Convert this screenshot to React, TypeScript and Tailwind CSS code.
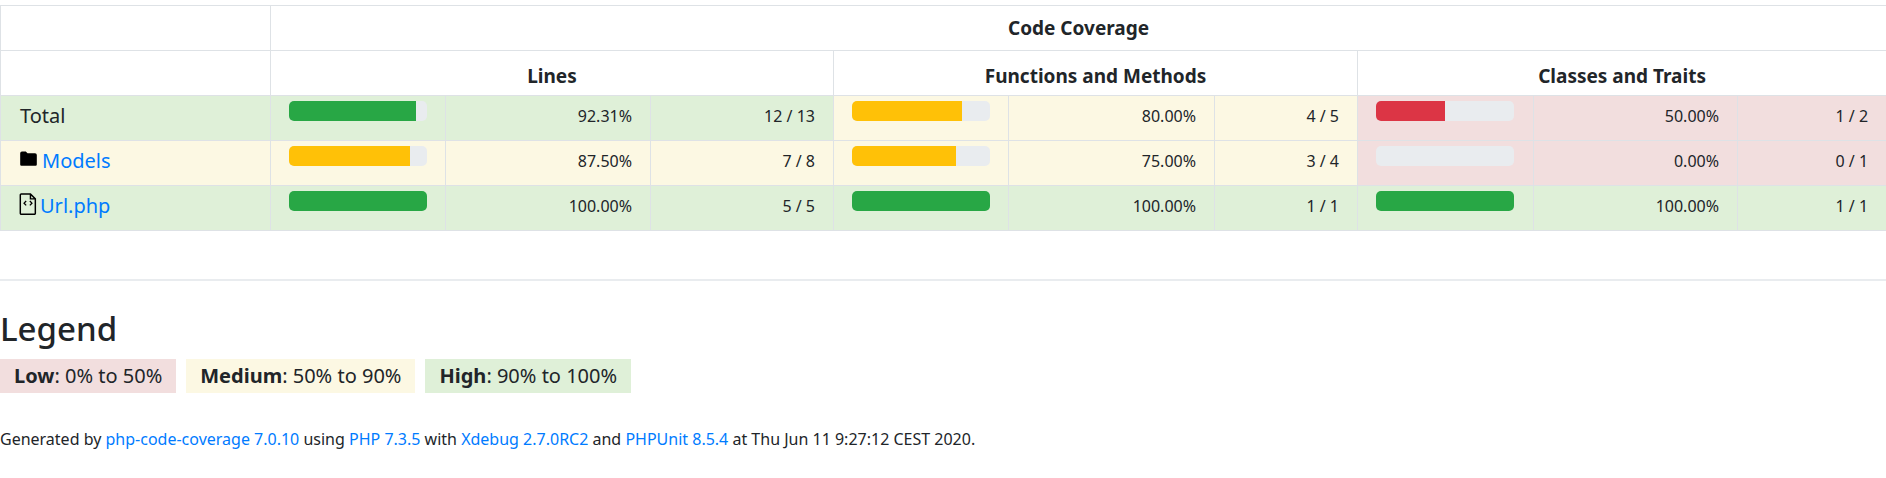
import React from "react";

type Cell = { pct: number; label: string; frac: string };
type Row = { name: string; kind: "total" | "dir" | "file"; cells: Cell[] };

const rows: Row[] = [
  { name: "Total", kind: "total", cells: [
    { pct: 92.31, label: "92.31%", frac: "12 / 13" },
    { pct: 80, label: "80.00%", frac: "4 / 5" },
    { pct: 50, label: "50.00%", frac: "1 / 2" } ] },
  { name: "Models", kind: "dir", cells: [
    { pct: 87.5, label: "87.50%", frac: "7 / 8" },
    { pct: 75, label: "75.00%", frac: "3 / 4" },
    { pct: 0, label: "0.00%", frac: "0 / 1" } ] },
  { name: "Url.php", kind: "file", cells: [
    { pct: 100, label: "100.00%", frac: "5 / 5" },
    { pct: 100, label: "100.00%", frac: "1 / 1" },
    { pct: 100, label: "100.00%", frac: "1 / 1" } ] },
];

const bg = (p: number) => (p <= 50 ? "bg-[#f2dede]" : p < 90 ? "bg-[#fcf8e3]" : "bg-[#dff0d8]");
const bar = (p: number) => (p <= 50 ? "bg-[#dc3545]" : p < 90 ? "bg-[#ffc107]" : "bg-[#28a745]");

const Folder = () => (
  <svg width="19" height="19" viewBox="0 0 16 16" className="inline-block align-top mt-[2px] mr-[4px]">
    <path d="M1 3.5A1.5 1.5 0 0 1 2.5 2h3.2l1.5 1.5h6.3A1.5 1.5 0 0 1 15 5v8a1 1 0 0 1-1 1H2a1 1 0 0 1-1-1z" fill="#000" />
  </svg>
);
const FileCode = () => (
  <svg width="18" height="22" viewBox="0 0 14 18" className="inline-block align-top mt-[1px] mr-[3px]">
    <path d="M1.5 0.8h7.5l4 4v11.7a0.8 0.8 0 0 1-0.8 0.8H1.5a0.8 0.8 0 0 1-0.8-0.8V1.6a0.8 0.8 0 0 1 0.8-0.8z M9 0.8v4h4" fill="none" stroke="#000" strokeWidth="1.2" />
    <path d="M5.5 6.5L3.8 8.3l1.7 1.8M8.5 6.5l1.7 1.8-1.7 1.8" fill="none" stroke="#000" strokeWidth="1.1" />
  </svg>
);

const bd = "border border-[#dee2e6]";
const widths = [270, 175, 205, 183, 175, 206, 143, 176, 204, 149];

export default function App() {
  return (
    <div className="w-[1886px] h-[478px] bg-white text-[#212529] overflow-hidden" style={{ fontFamily: '"Noto Sans", "Open Sans", sans-serif' }}>
      <div className="pt-[5px]">
        <table className="border-collapse table-fixed w-[1886px]">
          <colgroup>
            {widths.map((w, i) => <col key={i} style={{ width: w }} />)}
          </colgroup>
          <thead>
            <tr className="h-[45px]">
              <td className={bd}></td>
              <td colSpan={9} className={`${bd} text-center font-bold text-[19px]`}>Code Coverage</td>
            </tr>
            <tr className="h-[45px]">
              <td className={bd}></td>
              <td colSpan={3} className={`${bd} text-center font-bold text-[19px] pt-[6px]`}>Lines</td>
              <td colSpan={3} className={`${bd} text-center font-bold text-[19px] pt-[6px]`}>Functions and Methods</td>
              <td colSpan={3} className={`${bd} text-center font-bold text-[19px] pt-[6px]`}>Classes and Traits</td>
            </tr>
          </thead>
          <tbody>
            {rows.map((r) => (
              <tr key={r.name} className="h-[45px]">
                <td className={`${bd} ${bg(r.cells[0].pct)} px-[18px] pt-[6px] text-[20px] align-top leading-[28px]`}>
                  {r.kind === "dir" && <Folder />}
                  {r.kind === "file" && <FileCode />}
                  {r.kind === "total" ? <span className="pl-[1px]">Total</span> : <span className="text-[#007bff]">{r.name}</span>}
                </td>
                {r.cells.map((c, i) => (
                  <React.Fragment key={i}>
                    <td className={`${bd} ${bg(c.pct)} align-top pt-[5px] pl-[18px]`}>
                      <div className="w-[138px] h-[20px] rounded-[5px] bg-[#e9ecef] overflow-hidden flex">
                        <div className={bar(c.pct)} style={{ width: `${c.pct}%` }} />
                      </div>
                    </td>
                    <td className={`${bd} ${bg(c.pct)} text-right pr-[18px] align-top pt-[8px] text-[16px]`}>{c.label}</td>
                    <td className={`${bd} ${bg(c.pct)} text-right pr-[18px] align-top pt-[8px] text-[16px]`}>{c.frac}</td>
                  </React.Fragment>
                ))}
              </tr>
            ))}
          </tbody>
        </table>
      </div>
      <div className="mt-[48px] border-t-2 border-[#e9ecef]" />
      <h2 className="mt-[28px] text-[33px] font-medium leading-[40px]">Legend</h2>
      <div className="mt-[10px] flex gap-[10px] text-[20px]">
        <span className="bg-[#f2dede] px-[14px] py-[2px]"><b>Low</b>: 0% to 50%</span>
        <span className="bg-[#fcf8e3] px-[14px] py-[2px]"><b>Medium</b>: 50% to 90%</span>
        <span className="bg-[#dff0d8] px-[14px] py-[2px]"><b>High</b>: 90% to 100%</span>
      </div>
      <p className="mt-[34px] text-[16px]">
        Generated by <span className="text-[#007bff]">php-code-coverage 7.0.10</span> using <span className="text-[#007bff]">PHP 7.3.5</span> with <span className="text-[#007bff]">Xdebug 2.7.0RC2</span> and <span className="text-[#007bff]">PHPUnit 8.5.4</span> at Thu Jun 11 9:27:12 CEST 2020.
      </p>
    </div>
  );
}
